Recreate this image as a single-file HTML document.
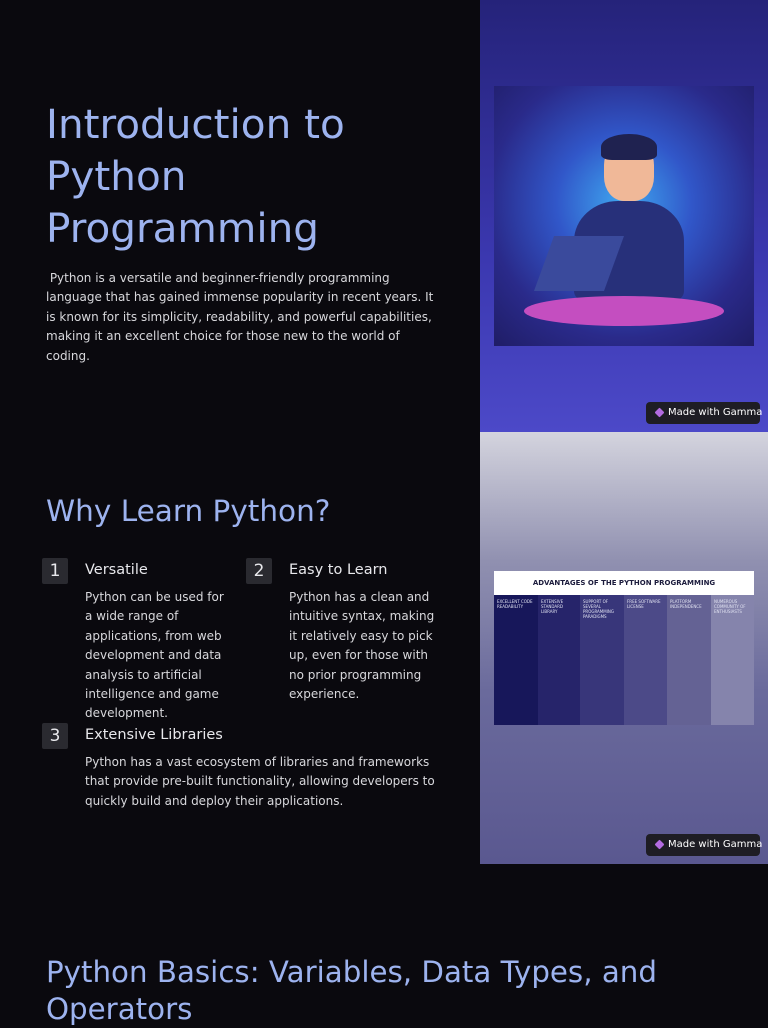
<!DOCTYPE html>
<html><head><meta charset="utf-8"><style>
*{margin:0;padding:0;box-sizing:border-box}
body{width:768px;height:1024px;overflow:hidden;background:#0a090e;font-family:"DejaVu Sans",sans-serif;position:relative}
.abs{position:absolute}
h1{position:absolute;left:46px;top:98px;font-weight:400;font-size:40.5px;line-height:52px;color:#9db3ef}
h2{position:absolute;font-weight:400;color:#9db3ef;white-space:nowrap}
.p{color:#d8d8dc;font-size:12px;line-height:19.4px}
.num{position:absolute;width:26px;height:26px;background:#2a2a30;color:#e8e8ec;font-size:17px;text-align:center;line-height:26px;border-radius:2px}
.t{position:absolute;color:#e8e8ec;font-size:14.5px}
.badge{position:absolute;background:#1e1d24;color:#fff;font-size:10px;border-radius:4px;padding:0 8px 0 22px;height:22px;line-height:22px;white-space:nowrap;width:114px}
.badge:before{content:"";position:absolute;left:10px;top:7px;width:7px;height:7px;background:#b36be0;transform:rotate(45deg);border-radius:1px}
.col{float:left;height:100%;padding:4px 3px;color:#dfe0f0;font-size:4px;line-height:5px}
</style></head><body>
<h1>Introduction to<br>Python<br>Programming</h1>
<div class="abs p" style="left:46px;top:269px;width:392px">&nbsp;Python is a versatile and beginner-friendly programming language that has gained immense popularity in recent years. It is known for its simplicity, readability, and powerful capabilities, making it an excellent choice for those new to the world of coding.</div>

<div class="abs" style="left:480px;top:0;width:288px;height:432px;background:linear-gradient(180deg,#25237a 0%,#3b38b0 60%,#4c49c8 100%)"></div>
<div class="abs" style="left:494px;top:86px;width:260px;height:260px;background:radial-gradient(circle at 50% 45%,#3fa8f0 0%,#3157c9 35%,#2a2a8a 70%,#1f1d66 100%)">
 <div class="abs" style="left:110px;top:55px;width:50px;height:60px;background:#f0b898;border-radius:40%;"></div>
 <div class="abs" style="left:107px;top:48px;width:56px;height:26px;background:#1f2250;border-radius:50% 50% 20% 20%"></div>
 <div class="abs" style="left:80px;top:115px;width:110px;height:100px;background:#27307a;border-radius:40% 40% 10% 10%"></div>
 <div class="abs" style="left:50px;top:150px;width:70px;height:55px;background:#3a4a9c;transform:skewX(-20deg)"></div>
 <div class="abs" style="left:30px;top:210px;width:200px;height:30px;background:#c44ec0;border-radius:50%"></div>
</div>
<div class="badge" style="left:646px;top:402px">Made with Gamma</div>

<div class="abs" style="left:480px;top:432px;width:288px;height:432px;background:linear-gradient(180deg,#d4d4de 0%,#9090b0 30%,#6a6a9c 60%,#5a5890 100%)"></div>
<div class="abs" style="left:494px;top:571px;width:260px;height:24px;background:#fff;color:#1b1b3c;font-size:7px;font-weight:bold;text-align:center;line-height:24px">ADVANTAGES OF THE PYTHON PROGRAMMING</div>
<div class="abs" style="left:494px;top:595px;width:260px;height:130px">
 <div class="col" style="width:44px;background:#17175a">EXCELLENT CODE READABILITY</div>
 <div class="col" style="width:42px;background:#26246a">EXTENSIVE STANDARD LIBRARY</div>
 <div class="col" style="width:44px;background:#38367a">SUPPORT OF SEVERAL PROGRAMMING PARADIGMS</div>
 <div class="col" style="width:43px;background:#4c4a88">FREE SOFTWARE LICENSE</div>
 <div class="col" style="width:44px;background:#646294">PLATFORM INDEPENDENCE</div>
 <div class="col" style="width:43px;background:#8584ac">NUMEROUS COMMUNITY OF ENTHUSIASTS</div>
</div>
<div class="badge" style="left:646px;top:834px">Made with Gamma</div>

<h2 style="left:46px;top:494px;font-size:29.5px">Why Learn Python?</h2>
<div class="num" style="left:42px;top:558px">1</div>
<div class="t" style="left:85px;top:562px">Versatile</div>
<div class="abs p" style="left:85px;top:588px;width:148px">Python can be used for a wide range of applications, from web development and data analysis to artificial intelligence and game development.</div>
<div class="num" style="left:246px;top:558px">2</div>
<div class="t" style="left:289px;top:562px">Easy to Learn</div>
<div class="abs p" style="left:289px;top:588px;width:150px">Python has a clean and intuitive syntax, making it relatively easy to pick up, even for those with no prior programming experience.</div>
<div class="num" style="left:42px;top:723px">3</div>
<div class="t" style="left:85px;top:727px">Extensive Libraries</div>
<div class="abs p" style="left:85px;top:753px;width:350px">Python has a vast ecosystem of libraries and frameworks that provide pre-built functionality, allowing developers to quickly build and deploy their applications.</div>

<h2 style="left:46px;top:954px;font-size:29.3px;line-height:37px">Python Basics: Variables, Data Types, and<br>Operators</h2>
</body></html>
